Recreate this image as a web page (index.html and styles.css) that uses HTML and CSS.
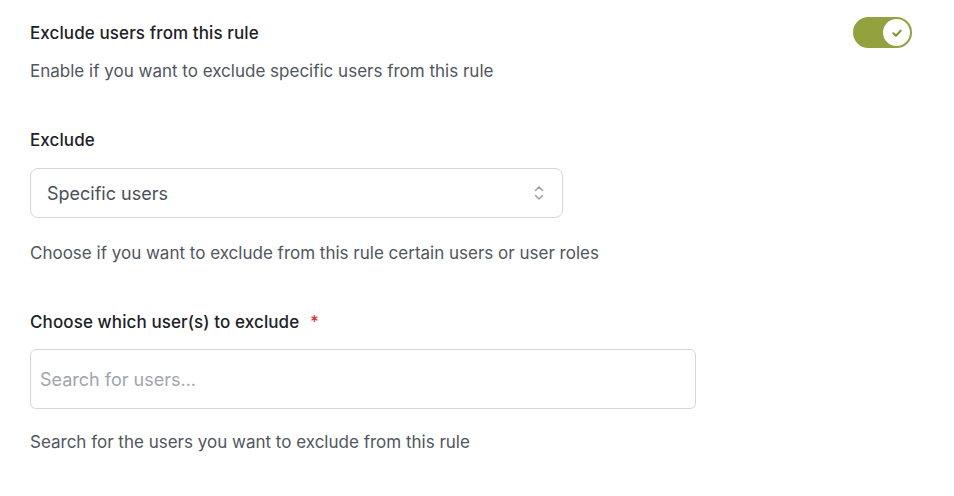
FILE: index.html
```html
<!DOCTYPE html>
<html>
<head>
<meta charset="utf-8">
<link rel="stylesheet" href="styles.css">
</head>
<body>
<div class="page">
  <section class="field toggle-field">
    <div class="toggle-row">
      <div class="label">Exclude users from this rule</div>
      <div class="toggle">
        <div class="knob">
          <svg width="14" height="14" viewBox="0 0 14 14"><path d="M3.3 7.3 L5.9 9.8 L10.7 4.7" fill="none" stroke="#86933a" stroke-width="2.1" stroke-linecap="round" stroke-linejoin="round"/></svg>
        </div>
      </div>
    </div>
    <div class="help first-help">Enable if you want to exclude specific users from this rule</div>
  </section>

  <section class="field">
    <div class="label">Exclude</div>
    <div class="select">
      <span class="select-value">Specific users</span>
      <svg class="chev" width="14" height="18" viewBox="0 0 14 18"><path d="M3.5 6.5 L7 3 L10.5 6.5 M3.5 11.5 L7 15 L10.5 11.5" fill="none" stroke="#9aa0a8" stroke-width="1.5" stroke-linecap="round" stroke-linejoin="round"/></svg>
    </div>
    <div class="help">Choose if you want to exclude from this rule certain users or user roles</div>
  </section>

  <section class="field">
    <div class="label">Choose which user(s) to exclude <span class="req">*</span></div>
    <div class="search">
      <span class="placeholder">Search for users...</span>
    </div>
    <div class="help last-help">Search for the users you want to exclude from this rule</div>
  </section>
</div>
</body>
</html>
```

FILE: styles.css
```css
html, body {
  margin: 0;
  padding: 0;
  background: #ffffff;
}
body {
  font-family: Inter, "Noto Sans", "Liberation Sans", sans-serif;
  color: #1f2328;
}
.page {
  padding: 17px 42px 0 30px;
  display: flex;
  flex-direction: column;
}
.field {
  display: flex;
  flex-direction: column;
}
.toggle-row {
  display: flex;
  justify-content: space-between;
  align-items: center;
}
.label {
  font-size: 17px;
  font-weight: 500;
  line-height: 22px;
  letter-spacing: 0.1px;
  color: #1d2127;
}
.toggle {
  width: 59px;
  height: 31px;
  border-radius: 16px;
  background: #93a13f;
  display: flex;
  align-items: center;
  justify-content: flex-end;
  padding-right: 2px;
  box-sizing: border-box;
}
.knob {
  width: 27px;
  height: 27px;
  border-radius: 50%;
  background: #fff;
  display: flex;
  align-items: center;
  justify-content: center;
}
.help {
  font-size: 17px;
  line-height: 22px;
  color: #50565e;
  margin-top: 24px;
}
.first-help {
  margin-top: 12px;
}
.last-help {
  margin-top: 22px;
}
.field + .field {
  margin-top: 47px;
}
.select {
  margin-top: 17px;
  width: 533px;
  height: 50px;
  box-sizing: border-box;
  border: 1px solid #d4d7dc;
  border-radius: 8px;
  display: flex;
  align-items: center;
  justify-content: space-between;
  padding: 0 16px 0 16px;
}
.select-value {
  font-size: 18px;
  color: #4a5058;
}
.chev {
  display: block;
}
.req {
  color: #d0353a;
  margin-left: 6px;
}
.search {
  margin-top: 16px;
  width: 666px;
  height: 60px;
  box-sizing: border-box;
  border: 1px solid #d4d7dc;
  border-radius: 6px;
  display: flex;
  align-items: center;
  padding: 0 9px;
}
.placeholder {
  font-size: 18px;
  color: #a0a5ac;
}
```
